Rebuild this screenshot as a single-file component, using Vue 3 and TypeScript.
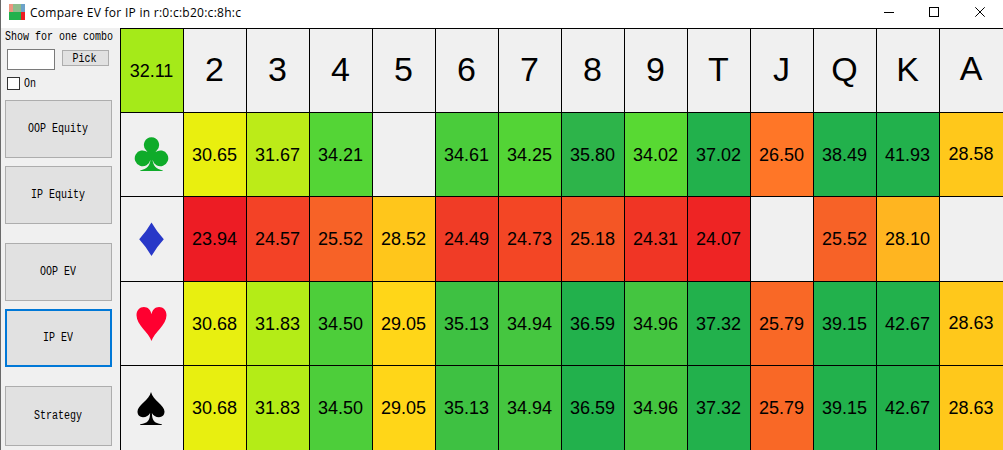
<script setup lang="ts">
type Suit = 'club' | 'diamond' | 'heart' | 'spade'
interface Cell { value: string; color: string }

const ranks = ['2', '3', '4', '5', '6', '7', '8', '9', 'T', 'J', 'Q', 'K', 'A']

const colors: Record<string, string> = {
  '23.94': '#ed1c24', '24.07': '#ee2424', '24.31': '#f03525', '24.49': '#f03c26',
  '24.57': '#f34226', '24.73': '#f34625', '25.18': '#f45625', '25.52': '#f76227',
  '25.79': '#f96826', '26.50': '#ff7627', '28.10': '#ffb520', '28.52': '#ffc61b',
  '28.58': '#ffc81b', '28.63': '#ffc81b', '29.05': '#ffd618', '30.65': '#e9ef0f',
  '30.68': '#e8ef10', '31.67': '#bceb18', '31.83': '#b4ec17', '32.11': '#a5ea19',
  '34.02': '#58d933', '34.21': '#54d536', '34.25': '#53d436', '34.50': '#4dce3a',
  '34.61': '#4acc3b', '34.94': '#45c640', '34.96': '#44c540', '35.13': '#3ec142',
  '35.80': '#2db44a',
}

const toCells = (line: string): Cell[] =>
  line.split(' ').map((v) => ({
    value: v === '-' ? '' : v,
    color: v === '-' ? '#f0f0f0' : colors[v] ?? '#22b14c',
  }))

const rows: { suit: Suit; cells: Cell[] }[] = [
  { suit: 'club', cells: toCells('30.65 31.67 34.21 - 34.61 34.25 35.80 34.02 37.02 26.50 38.49 41.93 28.58') },
  { suit: 'diamond', cells: toCells('23.94 24.57 25.52 28.52 24.49 24.73 25.18 24.31 24.07 - 25.52 28.10 -') },
  { suit: 'heart', cells: toCells('30.68 31.83 34.50 29.05 35.13 34.94 36.59 34.96 37.32 25.79 39.15 42.67 28.63') },
  { suit: 'spade', cells: toCells('30.68 31.83 34.50 29.05 35.13 34.94 36.59 34.96 37.32 25.79 39.15 42.67 28.63') },
]

const suits: Record<Suit, { color: string; path: string }> = {
  club: {
    color: '#0fab2a',
    path: 'M19.500 3.2a7.6 7.6 0 0 1 5.6 12.7l-1.6 2.2a7.900 7.900 0 1 1-2.900 7.700c.3 5.600 3.400 9.500 10.200 10.600v.7h-22.600v-.7c6.800-1.100 9.900-5 10.200-10.600a7.900 7.900 0 1 1-2.900-7.700l-1.600-2.200a7.600 7.600 0 0 1 5.600-12.700z',
  },
  diamond: {
    color: '#2838c8',
    path: 'M19.500 3.500Q25 13 31.800 20.200Q25 27.500 19.500 37Q14 27.500 7.200 20.200Q14 13 19.500 3.500z',
  },
  heart: {
    color: '#ff0030',
    path: 'M19.500 38C17 29.500 4.500 22 4.500 12.200C4.500 7.200 7.800 4 11.900 4C15.800 4 18.700 6.800 19.500 11.200C20.300 6.800 23.200 4 27.100 4C31.200 4 34.500 7.200 34.500 12.200C34.500 22 22 29.500 19.500 38z',
  },
  spade: {
    color: '#000',
    path: 'M19 4C21 12.500 32.500 17.300 32.500 23.600C32.500 27.200 30.100 29.300 27 29.300C23.800 29.300 21.100 27.600 19.900 25C20.100 32.500 22 35.200 29.800 36.200V37H8.200V36.200C16 35.200 17.900 32.500 18.100 25C16.900 27.600 14.200 29.300 11 29.300C7.900 29.300 5.500 27.200 5.500 23.600C5.500 17.300 17 12.500 19 4z',
  },
}

const modes = [
  { label: 'OOP Equity', cls: 'oop-eq' },
  { label: 'IP Equity', cls: 'ip-eq' },
  { label: 'OOP EV', cls: 'oop-ev' },
  { label: 'IP EV', cls: 'ip-ev active' },
  { label: 'Strategy', cls: 'strategy' },
]
</script>

<template>
  <div class="window">
    <header class="titlebar">
      <svg class="app-icon" width="16" height="16" shape-rendering="crispEdges">
        <rect width="4" height="8" fill="#ed9580" />
        <rect x="4" width="8" height="8" fill="#8fbc8b" />
        <rect x="12" width="4" height="8" fill="#6ca2c9" />
        <rect y="8" width="12" height="8" fill="#22b14c" />
        <rect x="12" y="8" width="4" height="8" fill="#ed1c24" />
      </svg>
      <span class="title">Compare EV for IP in r:0:c:b20:c:8h:c</span>
      <svg class="controls" width="104" height="12" fill="none" stroke="#000">
        <path d="M0 6.500h10M45.500 1.500h9v9h-9z" shape-rendering="crispEdges" />
        <path d="M91.300 1.300l9.400 9.400M100.700 1.300l-9.400 9.400" />
      </svg>
    </header>
    <div class="body">
      <aside class="sidebar">
        <div class="caption"><span class="mono">Show for one combo</span></div>
        <div class="combo">
          <div class="input"></div>
          <button class="pick"><span class="mono">Pick</span></button>
        </div>
        <label class="check"><i class="box"></i><span class="mono">On</span></label>
        <button v-for="m in modes" :key="m.label" class="mode" :class="m.cls">
          <span class="mono">{{ m.label }}</span>
        </button>
      </aside>
      <main class="grid">
        <div class="cell value total">32.11</div>
        <div v-for="r in ranks" :key="r" class="cell rank" :class="{ last: r === 'A' }">{{ r }}</div>
        <template v-for="row in rows" :key="row.suit">
          <div class="cell suit">
            <svg width="40" height="40"><path :d="suits[row.suit].path" :fill="suits[row.suit].color" /></svg>
          </div>
          <div
            v-for="(c, i) in row.cells"
            :key="i"
            class="cell value"
            :class="[row.suit, { last: i === 12 }]"
            :style="{ backgroundColor: c.color }"
          >{{ c.value }}</div>
        </template>
      </main>
    </div>
  </div>
</template>

<style>
body { margin: 0; overflow: hidden; }
</style>

<style scoped>
.window {
  width: 1003px;
  height: 450px;
  box-sizing: border-box;
  border-left: 1px solid #696969;
  background: #f0f0f0;
  color: #000;
  overflow: hidden;
}
.titlebar {
  height: 28px;
  box-sizing: border-box;
  display: flex;
  align-items: flex-start;
  background: #fff;
  padding-left: 8px;
}
.app-icon { margin-top: 4px; }
.title {
  margin-left: 5px;
  font: 12px/26px "Open Sans", "Noto Sans", sans-serif;
  letter-spacing: 0.27px;
  white-space: pre;
}
.controls { margin: 6px 15px 0 auto; }
.body { display: flex; height: 422px; }
.sidebar {
  width: 119px;
  box-sizing: border-box;
  padding-left: 4px;
  display: flex;
  flex-direction: column;
  flex: none;
}
.mono {
  display: inline-block;
  font: 10px/12px "Liberation Mono", monospace;
  white-space: pre;
  transform: scaleY(1.2);
}
.caption { height: 21px; padding-top: 4px; box-sizing: border-box; line-height: 12px; display: flex; }
.combo { display: flex; height: 21px; padding-left: 2px; }
.input { width: 48px; height: 21px; box-sizing: border-box; border: 1px solid #7a7a7a; background: #fff; }
button {
  display: flex;
  align-items: center;
  justify-content: center;
  box-sizing: border-box;
  padding: 0;
  color: #000;
  background: #e1e1e1;
  border: 1px solid #adadad;
}
.pick { width: 47px; height: 16px; margin: 1px 0 0 7px; padding-top: 3px; padding-right: 2px; }
.check { display: flex; align-items: center; height: 13px; margin: 7px 0 10px 2px; }
.check .mono { margin-top: 2px; }
.box { width: 13px; height: 13px; box-sizing: border-box; border: 1px solid #333; background: #fff; margin-right: 4px; }
.mode { width: 107px; height: 58px; flex: none; padding-right: 1px; padding-top: 2px; }
.ip-eq { margin-top: 8px; }
.oop-ev { margin-top: 19px; }
.ip-ev { margin-top: 8px; }
.strategy { margin-top: 19px; height: 60px; }
.active { border: 2px solid #0078d7; }
.grid {
  display: grid;
  grid-template-columns: repeat(13, 63px) 64px;
  grid-template-rows: 84px 84px 85px 84px 85px;
}
.cell {
  display: flex;
  align-items: center;
  justify-content: center;
  box-sizing: border-box;
  border-left: 1px solid #000;
  border-top: 1px solid #000;
  background: #f0f0f0;
  font-family: "Liberation Sans", Arial, sans-serif;
}
.value { font-size: 18px; line-height: 20px; padding-top: 1px; padding-right: 1px; }
.diamond, .spade { padding-top: 0; padding-bottom: 1px; }
.rank { font-size: 34px; line-height: 38px; padding-bottom: 3px; padding-right: 1px; }
.suit { padding-bottom: 1px; }
.value.last { padding-bottom: 2px; }
.spade.last { padding-bottom: 1px; }
.rank.last { padding-bottom: 5px; }
.total { background: #a5ea19; }
</style>
